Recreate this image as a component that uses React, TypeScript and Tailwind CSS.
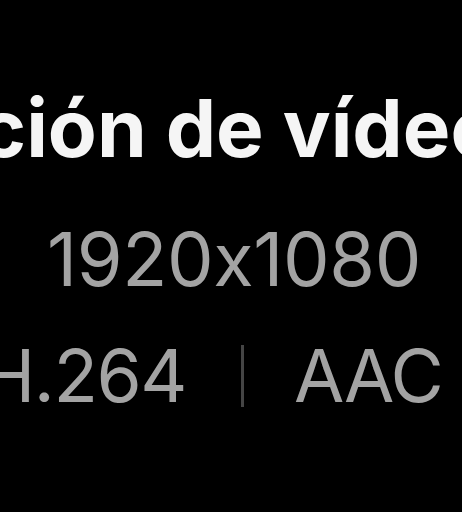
export default function App() {
  return (
    <div
      className="w-[462px] h-[512px] bg-black overflow-hidden flex flex-col [font-feature-settings:'calt'_0]"
      style={{ fontFamily: "Inter, 'Noto Sans', sans-serif" }}
    >
      <div className="mt-[88px] whitespace-nowrap text-[80px] leading-none font-bold text-[#f5f5f5] -ml-[325px]">
        Información de vídeo
      </div>
      <div className="mt-[54px] pl-[6px] flex justify-center whitespace-nowrap text-[74px] leading-none font-normal tracking-[-0.005em] text-[#a3a3a3]">
        1920x1080
      </div>
      <div className="mt-[43px] flex items-center whitespace-nowrap text-[73px] leading-none font-normal tracking-[-0.02em] text-[#a3a3a3]">
        <div className="w-[186px] shrink-0 flex justify-end">H.264</div>
        <div className="ml-[55px] w-[3px] h-[62px] shrink-0 bg-[#454545]" />
        <div className="ml-[50px]">AAC</div>
      </div>
    </div>
  );
}
